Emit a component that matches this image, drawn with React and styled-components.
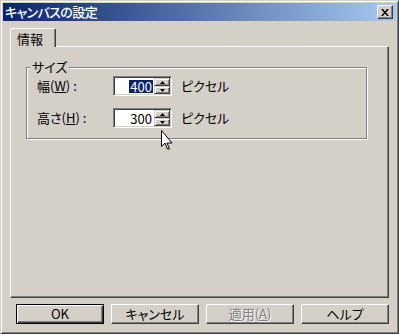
import React from 'react';
import styled, { createGlobalStyle, css } from 'styled-components';

const GlobalStyle = createGlobalStyle`
  html, body {
    margin: 0;
    padding: 0;
    background: #d4d0c8;
  }
  body {
    font-family: "Noto Sans CJK JP", "Liberation Sans", sans-serif;
    font-size: 12px;
    color: #000;
    font-feature-settings: "palt";
  }
`;

const raised = css`
  border: 1px solid;
  border-color: #fff #404040 #404040 #fff;
  box-shadow: inset -1px -1px 0 #808080;
`;

const Window = styled.div`
  position: relative;
  width: 399px;
  height: 334px;
  box-sizing: border-box;
  border: 1px solid;
  border-color: #d4d0c8 #404040 #404040 #d4d0c8;
  box-shadow: inset 1px 1px 0 #fff, inset -1px -1px 0 #808080;
  padding: 2px;
  display: flex;
  flex-direction: column;
  background: #d4d0c8;
`;

const TitleBar = styled.div`
  height: 18px;
  flex: none;
  display: flex;
  align-items: center;
  justify-content: space-between;
  padding: 0 3px 0 2px;
  background: linear-gradient(to right, #0a246a 0%, #a6caf0 100%);
`;

const Title = styled.span`
  color: #fff;
  font-weight: 500;
  font-size: 13px;
  line-height: 18px;
  letter-spacing: -0.6px;
`;

const CloseButton = styled.div`
  ${raised};
  width: 14px;
  height: 12px;
  background: #d4d0c8;
  display: flex;
  align-items: center;
  justify-content: center;
`;

const Body = styled.div`
  flex: 1;
  display: flex;
  flex-direction: column;
  padding: 7px 7px 7px 7px;
`;

const TabStrip = styled.div`
  display: flex;
  position: relative;
  z-index: 1;
  margin-bottom: -1px;
`;

const Tab = styled.div`
  height: 18px;
  width: 38px;
  padding-left: 6px;
  border: 1px solid;
  border-bottom: none;
  border-color: #fff #404040 transparent #fff;
  border-top-left-radius: 2px;
  border-top-right-radius: 2px;
  box-shadow: inset -1px 0 0 #808080;
  background: #d4d0c8;
  font-size: 13px;
  line-height: 19px;
`;

const Panel = styled.div`
  flex: 1;
  ${raised};
  padding: 20px 0 0 15px;
`;

const GroupBox = styled.div`
  position: relative;
  width: 329px;
  border: 1px solid #808080;
  box-shadow: 1px 1px 0 #fff, inset 1px 1px 0 #fff;
  padding: 8px 0 10px 10px;
  display: flex;
  flex-direction: column;
  gap: 12px;
`;

const GroupCaption = styled.span`
  position: absolute;
  top: -9px;
  left: 3px;
  padding: 0 2px;
  background: #d4d0c8;
  font-size: 13px;
  line-height: 16px;
`;

const FieldRow = styled.div`
  display: flex;
  align-items: center;
  height: 20px;
`;

const Label = styled.span`
  width: 76px;
  font-size: 13px;
  line-height: 16px;
`;

const Mnemonic = styled.span`
  text-decoration: underline;
  text-underline-offset: 1px;
`;

const SpinBox = styled.div`
  display: flex;
  width: 55px;
  height: 16px;
  border: 1px solid;
  border-color: #808080 #fff #fff #808080;
  box-shadow: inset 1px 1px 0 #404040, inset -1px -1px 0 #d4d0c8;
  padding: 1px;
  background: #fff;
`;

const SpinValue = styled.div`
  flex: 1;
  display: flex;
  justify-content: flex-end;
  align-items: center;
  padding-right: 1px;
`;

const ValueText = styled.span`
  font-size: 13px;
  line-height: 13px;
  padding: 0 1px;
  ${(p) =>
    p.$selected &&
    css`
      background: #0a246a;
      color: #fff;
    `}
`;

const SpinButtons = styled.div`
  width: 16px;
  display: flex;
  flex-direction: column;
`;

const SpinButton = styled.div`
  flex: 1;
  border: 1px solid;
  border-color: #d4d0c8 #404040 #404040 #d4d0c8;
  box-shadow: inset 1px 1px 0 #fff, inset -1px -1px 0 #808080;
  background: #d4d0c8;
  display: flex;
  align-items: center;
  justify-content: center;
`;

const Unit = styled.span`
  margin-left: 9px;
  font-size: 13px;
  line-height: 16px;
`;

const ButtonRow = styled.div`
  display: flex;
  justify-content: flex-end;
  gap: 7px;
  margin-top: 6px;
`;

const Button = styled.div`
  width: 86px;
  height: 18px;
  ${raised};
  background: #d4d0c8;
  display: flex;
  align-items: center;
  justify-content: center;
  font-size: 13px;
  line-height: 16px;
  ${(p) =>
    p.$default &&
    css`
      width: 84px;
      height: 16px;
      border-color: #000;
      box-shadow: inset 1px 1px 0 #fff, inset -1px -1px 0 #404040,
        inset -2px -2px 0 #808080;
      padding: 1px;
    `}
  ${(p) =>
    p.$disabled &&
    css`
      color: #808080;
      text-shadow: 1px 1px 0 #fff;
    `}
`;

const Cursor = styled.svg`
  position: absolute;
  left: 160px;
  top: 129px;
  pointer-events: none;
`;

const Arrow = ({ down }) => (
  <svg width="5" height="3" viewBox="0 0 5 3">
    <path d={down ? 'M0 0h5L2.5 3z' : 'M0 3h5L2.5 0z'} fill="#000" />
  </svg>
);

const SizeField = ({ label, mnemonic, value, selected }) => (
  <FieldRow>
    <Label>
      {label}(<Mnemonic>{mnemonic}</Mnemonic>) :
    </Label>
    <SpinBox>
      <SpinValue>
        <ValueText $selected={selected}>{value}</ValueText>
      </SpinValue>
      <SpinButtons>
        <SpinButton>
          <Arrow />
        </SpinButton>
        <SpinButton>
          <Arrow down />
        </SpinButton>
      </SpinButtons>
    </SpinBox>
    <Unit>ピクセル</Unit>
  </FieldRow>
);

export default function App() {
  return (
    <>
      <GlobalStyle />
      <Window>
        <TitleBar>
          <Title>キャンバスの設定</Title>
          <CloseButton>
            <svg width="8" height="7" viewBox="0 0 8 7">
              <path
                d="M0 0h2l2 2.5L6 0h2L5 3.5 8 7H6L4 4.5 2 7H0l3-3.5z"
                fill="#000"
              />
            </svg>
          </CloseButton>
        </TitleBar>
        <Body>
          <TabStrip>
            <Tab>情報</Tab>
          </TabStrip>
          <Panel>
            <GroupBox>
              <GroupCaption>サイズ</GroupCaption>
              <SizeField label="幅" mnemonic="W" value="400" selected />
              <SizeField label="高さ" mnemonic="H" value="300" />
            </GroupBox>
          </Panel>
          <ButtonRow>
            <Button $default>OK</Button>
            <Button>キャンセル</Button>
            <Button $disabled>
              適用(<Mnemonic>A</Mnemonic>)
            </Button>
            <Button>ヘルプ</Button>
          </ButtonRow>
        </Body>
        <Cursor width="12" height="20" viewBox="0 0 12 20">
          <path
            d="M0.5 0.5v16l3.5-3.5 2.5 6h2l-2.5-6h5z"
            fill="#fff"
            stroke="#000"
            strokeWidth="1"
          />
        </Cursor>
      </Window>
    </>
  );
}
